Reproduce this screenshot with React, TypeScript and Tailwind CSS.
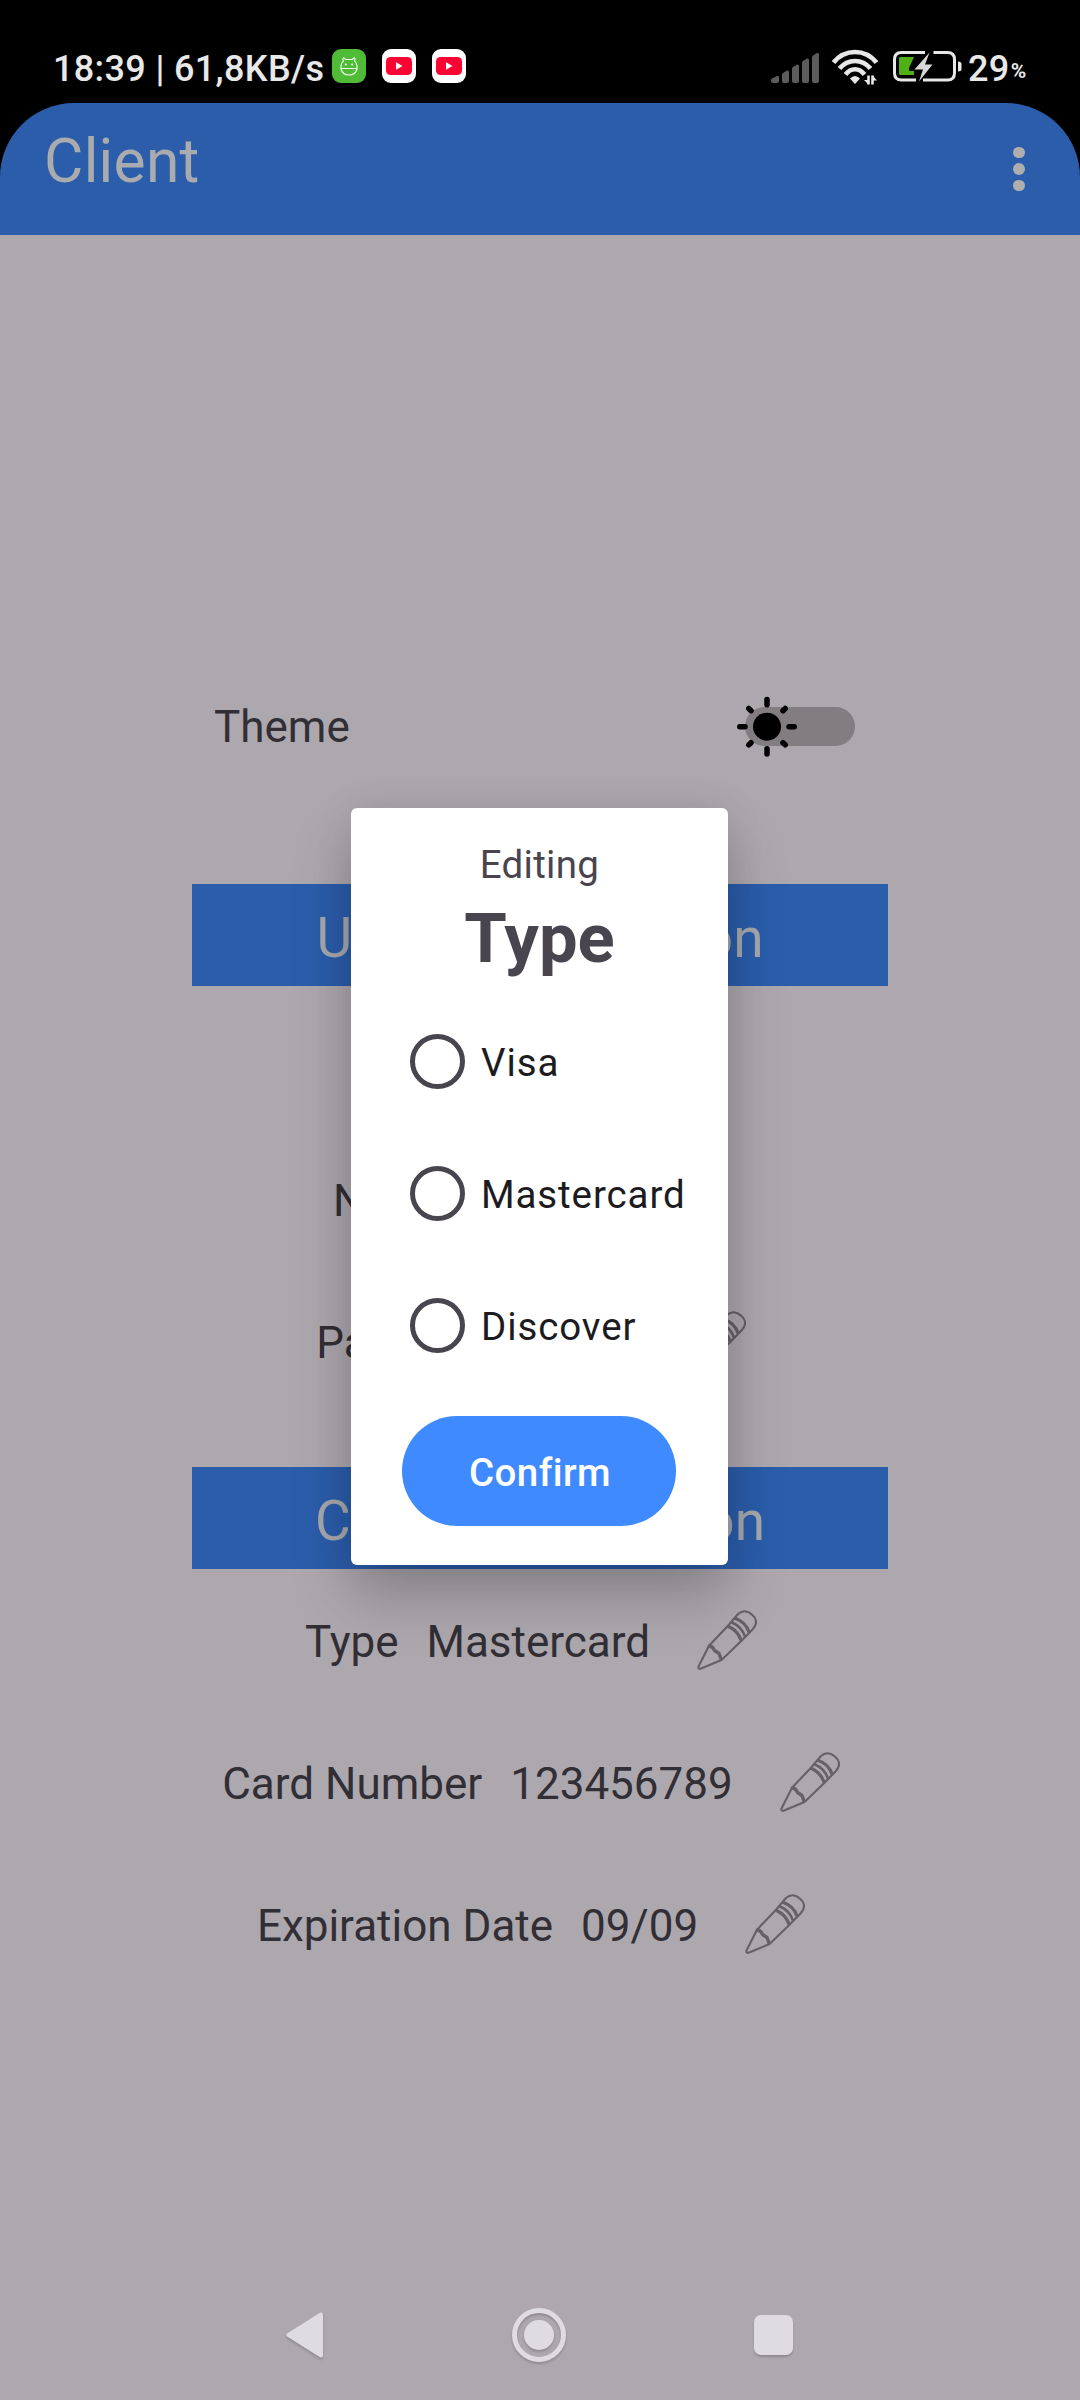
import React from "react";

function SignalBars() {
  return (
    <svg className="ml-[771px] h-[34px] w-[48px] shrink-0" viewBox="0 0 48 34" fill="#5c5c5c">
      <path d="M1 29.500 6 27Q8 26.500 8 28V32Q8 34 6 34H2Q0 34 0 32V31Q0 30 1 29.500Z" />
      <path d="M12 24 16 21.500Q18 21 18 23V32Q18 34 16 34H13Q11 34 11 32V26Q11 24.500 12 24Z" />
      <path d="M22 18 26 15.500Q28 15 28 17V32Q28 34 26 34H23Q21 34 21 32V20Q21 18.500 22 18Z" />
      <path d="M32 12 36 9.500Q38 9 38 11V32Q38 34 36 34H33Q31 34 31 32V14Q31 12.500 32 12Z" />
      <path d="M42 6.500 46 4Q48 3.500 48 5.500V32Q48 34 46 34H43Q41 34 41 32V8.500Q41 7 42 6.500Z" />
    </svg>
  );
}

function WifiIcon() {
  return (
    <svg className="ml-[12px] h-[36px] w-[48px] shrink-0" viewBox="0 0 48 36" fill="none" stroke="#e8e8e8">
      <path d="M2.500 13.500C14-0.500 34-0.500 45.500 13.500" strokeWidth="4.700" />
      <path d="M8.500 19.500C17 9.500 31 9.500 39.500 19.500" strokeWidth="4.700" />
      <path d="M14.500 25.500C20 18.500 28 18.500 33.500 25.500" strokeWidth="4.700" />
      <path d="M19 29.500Q24 24.500 29 29.500L24 35Z" fill="#e8e8e8" stroke="none" />
      <path d="M37.500 26.500V35.500M41.500 35.500V26.500" strokeWidth="2.600" />
      <path d="M33 31H37.500V35.500ZM41.500 26.500V31.500H46Z" fill="#e8e8e8" stroke="none" />
    </svg>
  );
}

function BatteryIcon() {
  return (
    <svg className="ml-[14px] h-[32px] w-[70px] shrink-0" viewBox="0 0 70 32">
      <path d="M6 7.500Q6 6 7.500 6H21L16 17V20H21V24H7.500Q6 24 6 22.500Z" fill="#4fb013" />
      <path
        d="M32 1.500H8.500Q1.500 1.500 1.500 8.500V22Q1.500 29 8.500 29H23M40.500 1.500H54.500Q61.500 1.500 61.500 8.500V22Q61.500 29 54.500 29H30"
        fill="none"
        stroke="#e8e8e8"
        strokeWidth="3"
      />
      <path d="M36.500 1.500 21.500 18.500H30L26 30.500 39.500 13.500H32Z" fill="#d8d8d8" />
      <path d="M65 10.500Q68.500 10.500 68.500 13V18Q68.500 20.500 65 20.500Z" fill="#e8e8e8" />
    </svg>
  );
}

function YouTubeBadge({ className }: { className: string }) {
  return (
    <svg className={`h-[34px] w-[34px] shrink-0 ${className}`} viewBox="0 0 34 34">
      <rect width="34" height="34" rx="9" fill="#fff" />
      <rect x="4" y="8" width="26" height="18" rx="4.500" fill="#fc0333" />
      <path d="M14 13.200V20.800L20.500 17Z" fill="#fff" />
    </svg>
  );
}

function StatusBar() {
  return (
    <div className="flex h-[103px] w-full items-start bg-black text-[#e8e8e8]">
      <div className="flex h-full w-0 items-start">
        <span className="ml-[53px] mt-[48px] w-[271px] shrink-0 whitespace-nowrap text-[36px] font-medium leading-[43px] tracking-[0.350px]">
          18:39 | 61,8KB/s
        </span>
        <svg className="ml-[8px] mt-[49px] h-[34px] w-[34px] shrink-0" viewBox="0 0 34 34">
          <rect width="34" height="34" rx="9" fill="#4fbb37" />
          <path
            d="M9 20V16.500Q9.500 13.500 11.300 12.200L11 9.500Q12 8 13.500 10.500H20.500Q22 8 23 9.500L22.700 12.200Q24.500 13.500 25 16.500V20Q23.500 26 17 26T9 20ZM9 19.500H25"
            fill="none"
            stroke="#effbe9"
            strokeWidth="1.200"
          />
          <circle cx="13.800" cy="15.500" r="1" fill="#fff" />
          <circle cx="20.200" cy="15.500" r="1" fill="#fff" />
        </svg>
        <YouTubeBadge className="ml-[16px] mt-[49px]" />
        <YouTubeBadge className="ml-[16px] mt-[49px]" />
      </div>
      <div className="flex h-full w-0 items-start pt-[49px]">
        <SignalBars />
        <WifiIcon />
        <div className="mt-[2px] flex shrink-0">
          <BatteryIcon />
        </div>
        <span className="-mt-px ml-[5px] shrink-0 text-[36px] font-medium leading-[43px] tracking-[0.350px]">29</span>
        <span className="ml-px mt-[10px] shrink-0 text-[21px] font-bold leading-[24px]">%</span>
      </div>
    </div>
  );
}

function AppBar() {
  return (
    <div className="w-full bg-black">
      <header className="flex h-[132px] items-start justify-between rounded-t-[74px] bg-[#2b5dab] pl-[44px] pr-[55.5px]">
        <h1 className="mt-[23px] text-[60.5px] font-normal leading-[72px] tracking-[0.250px] text-[#a9abae]">Client</h1>
        <div className="mt-[43.5px] flex flex-col gap-[5px]">
          <span className="h-[11.5px] w-[11.5px] rounded-full bg-[#aeaeae]" />
          <span className="h-[11.5px] w-[11.5px] rounded-full bg-[#aeaeae]" />
          <span className="h-[11.5px] w-[11.5px] rounded-full bg-[#aeaeae]" />
        </div>
      </header>
    </div>
  );
}

function ThemeToggle() {
  return (
    <svg className="h-[62px] w-[120px]" viewBox="0 0 120 62">
      <rect x="8" y="11" width="110" height="39" rx="19.500" fill="#827d81" />
      <circle cx="30" cy="30.700" r="14" />
      <g stroke="#000" strokeWidth="5.500" strokeLinecap="round">
        <path d="M30 3.500V8.700M30 52.700V57.900M2.800 30.700H8M52 30.700H57.200M11.800 12.500 14 14.700M46 14.700 48.200 12.500M11.800 48.900 14 46.700M46 46.700 48.200 48.900" />
      </g>
    </svg>
  );
}

function PencilIcon() {
  return (
    <svg
      className="h-[60px] w-[60px] shrink-0"
      viewBox="0 0 60 60"
      fill="none"
      stroke="#646265"
      strokeWidth="2.100"
      strokeLinejoin="round"
      strokeLinecap="round"
    >
      <path d="M12 35.700 1.500 56.500Q0.800 59.200 3.500 58.800L24.500 50 44.500 30.700 55.500 19.500C60.500 14.500 60 9 55.500 5 51 0.500 45.500 0 41 4L31 15.700Z" />
      <path d="M31.500 16.500Q40.500 20.500 44 30" strokeWidth="3.200" />
      <path d="M35 12.500Q44.500 16.500 48 26.500" strokeWidth="2.600" />
      <path d="M38.500 8.500Q48.500 12 52 22" strokeWidth="3.200" />
      <path d="M12.500 36Q16 36.500 17.500 40.500L22 43.500 24 49" strokeWidth="3.400" />
    </svg>
  );
}

function SectionTitle({ children }: { children: React.ReactNode }) {
  return (
    <h2 className="flex h-[102px] w-[696px] items-center justify-center whitespace-nowrap bg-[#2b5dab] pt-[6px] text-[55px] font-normal leading-[64px] text-[#a6a9ad] [word-spacing:36px]">
      {children}
    </h2>
  );
}

type DetailRowProps = { label: string; value: string; valueClass?: string; rowClass?: string };

function DetailRow({ label, value, valueClass = "", rowClass = "pr-[18px]" }: DetailRowProps) {
  return (
    <div className={`flex h-[142px] items-center justify-center text-[44px] leading-[52px] text-[#312f35] ${rowClass}`}>
      <span className="shrink-0">{label}</span>
      <span className={`ml-[28px] shrink-0 ${valueClass}`}>{value}</span>
      <span className="-mt-[5px] ml-[47px] flex">
        <PencilIcon />
      </span>
    </div>
  );
}

function RadioOption({ label }: { label: string }) {
  return (
    <label className="flex h-[132px] items-center">
      <span className="h-[55px] w-[55px] shrink-0 rounded-full border-[5.5px] border-[#49454e]" />
      <span className="ml-[16.5px] mt-[3px] text-[38.5px] leading-[46px] tracking-[0.900px] text-[#1c1b1f]">{label}</span>
    </label>
  );
}

function EditDialog() {
  return (
    <div
      role="dialog"
      className="absolute left-[351px] top-[808px] flex h-[757px] w-[377px] flex-col rounded-[6px] bg-white shadow-[0_32px_60px_rgba(0,0,0,0.22),0_0_40px_rgba(0,0,0,0.08)]"
    >
      <p className="mt-[34px] text-center text-[38.5px] leading-[46px] tracking-[0.300px] text-[#49454e]">Editing</p>
      <p className="mt-[11px] text-center text-[68.75px] font-bold leading-[80px] text-[#49454e]">Type</p>
      <div className="mt-[16px] flex flex-col pl-[58.5px]">
        <RadioOption label="Visa" />
        <RadioOption label="Mastercard" />
        <RadioOption label="Discover" />
      </div>
      <button className="ml-[51px] mt-[25px] flex h-[110px] w-[274px] items-center justify-center rounded-full bg-[#3f8aff] pl-[2px] pt-[3px] text-[38.5px] font-medium leading-[46px] tracking-[0.450px] text-white">
        Confirm
      </button>
    </div>
  );
}

function NavigationBar() {
  return (
    <nav className="flex h-[130px] items-center justify-between pl-[280px] pr-[280px]">
      <svg className="h-[60px] w-[48px] drop-shadow-[0_2px_1px_rgba(0,0,0,0.18)]" viewBox="0 0 48 60">
        <path d="M41 9.500V50.500L8.500 30Z" fill="#dedce0" stroke="#dedce0" strokeWidth="4" strokeLinejoin="round" />
      </svg>
      <svg className="-ml-[4px] h-[60px] w-[60px] drop-shadow-[0_2px_1px_rgba(0,0,0,0.18)]" viewBox="0 0 60 60">
        <circle cx="30" cy="30" r="24.500" fill="none" stroke="#dedce0" strokeWidth="5" />
        <circle cx="30" cy="30" r="15" fill="#dedce0" />
      </svg>
      <span className="mr-[7px] h-[40px] w-[39px] rounded-[7px] bg-[#dedce0] shadow-[0_2px_2px_rgba(0,0,0,0.18)]" />
    </nav>
  );
}

export default function App() {
  return (
    <div className="relative flex h-[2400px] w-[1080px] flex-col overflow-hidden bg-[#ada8ae] font-[Roboto,sans-serif]">
      <StatusBar />
      <AppBar />
      <main className="flex h-[2035px] flex-col items-center">
        <div className="mt-[426px] flex h-[132px] w-[696px] items-center justify-between pl-[22px] pr-[31px]">
          <span className="text-[44px] leading-[52px] text-[#312f35]">Theme</span>
          <ThemeToggle />
        </div>
        <div className="mt-[91px]">
          <SectionTitle>User Information</SectionTitle>
        </div>
        <div className="mt-[144px] w-full">
          <DetailRow label="Name" value="Client" valueClass="w-[134px]" rowClass="pr-[28px]" />
          <DetailRow label="Password" value="••••" valueClass="w-[100px]" />
        </div>
        <div className="mt-[53px]">
          <SectionTitle>Card Information</SectionTitle>
        </div>
        <div className="mt-[2px] w-full">
          <DetailRow label="Type" value="Mastercard" />
          <DetailRow label="Card Number" value="123456789" />
          <DetailRow label="Expiration Date" value="09/09" />
        </div>
      </main>
      <NavigationBar />
      <EditDialog />
    </div>
  );
}
